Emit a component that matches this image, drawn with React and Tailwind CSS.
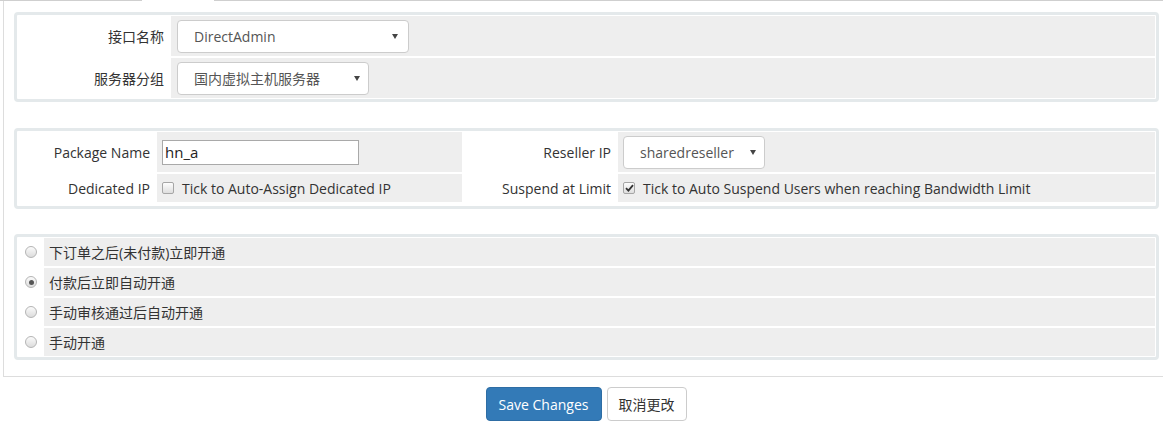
import React from 'react';

const font = { fontFamily: '"Open Sans", "Noto Sans CJK SC", sans-serif' };

const Arrow = () => (
  <svg width="6" height="5" viewBox="0 0 6 5" className="shrink-0">
    <path d="M0 0 L6 0 L3 5 Z" fill="#444" />
  </svg>
);

const Select = ({ value, className }) => (
  <div className={`flex items-center justify-between bg-white border border-[#ccc] rounded-[4px] ${className}`}>
    <span className="text-[#555]">{value}</span>
    <Arrow />
  </div>
);

const Checkbox = ({ checked }) => (
  <span className="w-[12px] h-[12px] rounded-[2px] border border-[#a6a6a6] bg-gradient-to-b from-[#fdfdfd] to-[#dedede] flex items-center justify-center shrink-0">
    {checked && (
      <svg width="9" height="8" viewBox="0 0 9 8">
        <path d="M1 4.2 L3.4 6.6 L8 1.2" stroke="#333" strokeWidth="1.8" fill="none" />
      </svg>
    )}
  </span>
);

const Radio = ({ checked }) => (
  <span className="w-[12px] h-[12px] rounded-full border border-[#b5b5b5] bg-gradient-to-b from-[#fbfbfb] to-[#dcdcdc] flex items-center justify-center shrink-0">
    {checked && <span className="w-[5px] h-[5px] rounded-full bg-[#555]" />}
  </span>
);

const Panel = ({ className = '', children }) => (
  <div className={`border-[3px] border-[#e4e9eb] rounded-[4px] p-px flex flex-col gap-[2px] ${className}`}>
    {children}
  </div>
);

const openOptions = ['下订单之后(未付款)立即开通', '付款后立即自动开通', '手动审核通过后自动开通', '手动开通'];

export default function App() {
  return (
    <div className="w-full overflow-hidden bg-white text-[14px] text-[#333]" style={font}>
      {/* tab strip bottom edge */}
      <div className="flex h-px">
        <div className="w-[142px] bg-[#cfcfcf]" />
        <div className="w-[72px]" />
        <div className="flex-1 bg-[#cfcfcf]" />
      </div>

      <div className="ml-[3px] w-[1166px]">
        <div className="border-l border-b border-[#ddd] pl-[10px] pr-[10px] pt-[11px] pb-[16px]">
          <Panel>
            <div className="flex h-[40px]">
              <div className="w-[153px] pr-[7px] flex items-center justify-end">接口名称</div>
              <div className="flex-1 bg-[#eee] pl-[6px] flex items-center">
                <Select value="DirectAdmin" className="w-[232px] h-[33px] pl-[16px] pr-[10px]" />
              </div>
            </div>
            <div className="flex h-[40px]">
              <div className="w-[153px] pr-[7px] flex items-center justify-end">服务器分组</div>
              <div className="flex-1 bg-[#eee] pl-[6px] flex items-center">
                <Select value="国内虚拟主机服务器" className="w-[192px] h-[33px] pl-[16px] pr-[8px]" />
              </div>
            </div>
          </Panel>

          <Panel className="mt-[26px] pb-[4px]">
            <div className="flex h-[40px]">
              <div className="w-[139px] pr-[7px] flex items-center justify-end">Package Name</div>
              <div className="w-[305px] bg-[#eee] pl-[5px] flex items-center">
                <div className="w-[197px] h-[25px] border border-[#a9a9a9] bg-white pl-[2px] flex items-center text-[15px] text-[#222]">hn_a</div>
              </div>
              <div className="w-[156px] pr-[7px] flex items-center justify-end">Reseller IP</div>
              <div className="flex-1 bg-[#eee] pl-[5px] flex items-center">
                <Select value="sharedreseller" className="w-[142px] h-[33px] pl-[16px] pr-[8px]" />
              </div>
            </div>
            <div className="flex h-[28px]">
              <div className="w-[139px] pr-[7px] flex items-center justify-end">Dedicated IP</div>
              <div className="w-[305px] bg-[#eee] pl-[5px] flex items-center gap-[8px]">
                <Checkbox />
                <span>Tick to Auto-Assign Dedicated IP</span>
              </div>
              <div className="w-[156px] pr-[7px] flex items-center justify-end">Suspend at Limit</div>
              <div className="flex-1 bg-[#eee] pl-[5px] flex items-center gap-[8px]">
                <Checkbox checked />
                <span>Tick to Auto Suspend Users when reaching Bandwidth Limit</span>
              </div>
            </div>
          </Panel>

          <Panel className="mt-[25px]">
            {openOptions.map((label, i) => (
              <div key={label} className="flex h-[28px]">
                <div className="w-[26px] pl-[7px] flex items-center">
                  <Radio checked={i === 1} />
                </div>
                <div className="flex-1 bg-[#eee] pl-[5px] flex items-center">{label}</div>
              </div>
            ))}
          </Panel>
        </div>

        <div className="mt-[10px] flex justify-center gap-[5px] pb-[7px]">
          <button className="w-[116px] h-[34px] rounded-[4px] bg-[#337ab7] border border-[#2e6da4] text-white text-[14px]">Save Changes</button>
          <button className="w-[80px] h-[34px] rounded-[4px] bg-white border border-[#ccc] text-[#333] text-[14px]">取消更改</button>
        </div>
      </div>
    </div>
  );
}
